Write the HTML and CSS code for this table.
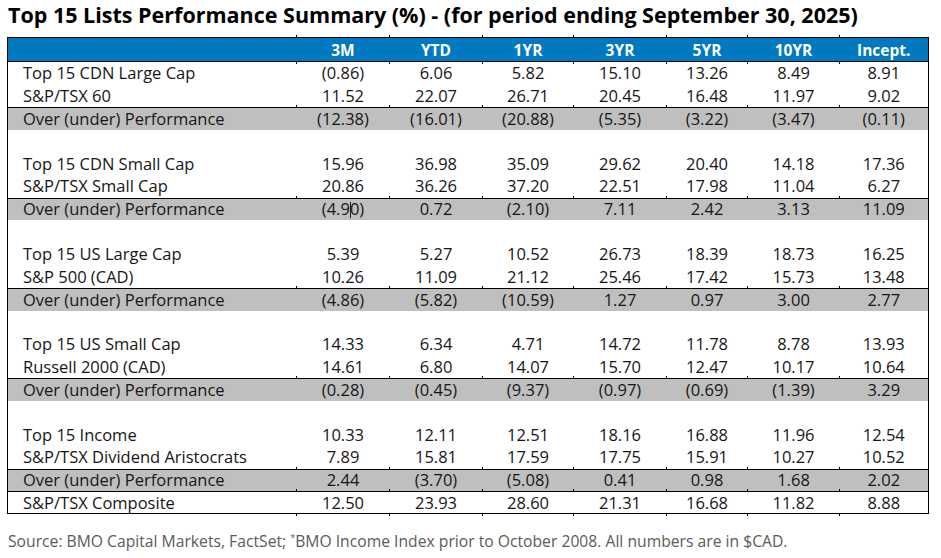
FILE: index.html
```html
<!DOCTYPE html>
<html lang="en">
<head>
<meta charset="utf-8">
<title>Top 15 Lists Performance Summary</title>
<link rel="stylesheet" href="styles.css">
</head>
<body>
<div class="page">
  <h1 class="title">Top 15 Lists Performance Summary (%) - (for period ending September 30, 2025)</h1>
  <table class="perf">
    <colgroup>
      <col class="c-label"><col class="c93"><col class="c93"><col class="c91"><col class="c93"><col class="c81"><col class="c92"><col class="c89">
    </colgroup>
    <thead>
      <tr class="head tick-top tick-bot">
        <th></th><th>3M</th><th>YTD</th><th>1YR</th><th>3YR</th><th>5YR</th><th>10YR</th><th>Incept.</th>
      </tr>
    </thead>
    <tbody>
      <tr><td>Top 15 CDN Large Cap</td><td>(0.86)</td><td>6.06</td><td>5.82</td><td>15.10</td><td>13.26</td><td>8.49</td><td>8.91</td></tr>
      <tr><td>S&amp;P/TSX 60</td><td>11.52</td><td>22.07</td><td>26.71</td><td>20.45</td><td>16.48</td><td>11.97</td><td>9.02</td></tr>
      <tr class="diff tick-top"><td>Over (under) Performance</td><td>(12.38)</td><td>(16.01)</td><td>(20.88)</td><td>(5.35)</td><td>(3.22)</td><td>(3.47)</td><td>(0.11)</td></tr>
      <tr class="spacer"><td></td><td></td><td></td><td></td><td></td><td></td><td></td><td></td></tr>

      <tr><td>Top 15 CDN Small Cap</td><td>15.96</td><td>36.98</td><td>35.09</td><td>29.62</td><td>20.40</td><td>14.18</td><td>17.36</td></tr>
      <tr><td>S&amp;P/TSX Small Cap</td><td>20.86</td><td>36.26</td><td>37.20</td><td>22.51</td><td>17.98</td><td>11.04</td><td>6.27</td></tr>
      <tr class="diff tick-top"><td>Over (under) Performance</td><td>(4.9<span class="caret"></span>0)</td><td>0.72</td><td>(2.10)</td><td>7.11</td><td>2.42</td><td>3.13</td><td>11.09</td></tr>
      <tr class="spacer"><td></td><td></td><td></td><td></td><td></td><td></td><td></td><td></td></tr>

      <tr><td>Top 15 US Large Cap</td><td>5.39</td><td>5.27</td><td>10.52</td><td>26.73</td><td>18.39</td><td>18.73</td><td>16.25</td></tr>
      <tr><td>S&amp;P 500 (CAD)</td><td>10.26</td><td>11.09</td><td>21.12</td><td>25.46</td><td>17.42</td><td>15.73</td><td>13.48</td></tr>
      <tr class="diff tick-top"><td>Over (under) Performance</td><td>(4.86)</td><td>(5.82)</td><td>(10.59)</td><td>1.27</td><td>0.97</td><td>3.00</td><td>2.77</td></tr>
      <tr class="spacer"><td></td><td></td><td></td><td></td><td></td><td></td><td></td><td></td></tr>

      <tr><td>Top 15 US Small Cap</td><td>14.33</td><td>6.34</td><td>4.71</td><td>14.72</td><td>11.78</td><td>8.78</td><td>13.93</td></tr>
      <tr><td>Russell 2000 (CAD)</td><td>14.61</td><td>6.80</td><td>14.07</td><td>15.70</td><td>12.47</td><td>10.17</td><td>10.64</td></tr>
      <tr class="diff tick-top"><td>Over (under) Performance</td><td>(0.28)</td><td>(0.45)</td><td>(9.37)</td><td>(0.97)</td><td>(0.69)</td><td>(1.39)</td><td>3.29</td></tr>
      <tr class="spacer"><td></td><td></td><td></td><td></td><td></td><td></td><td></td><td></td></tr>

      <tr><td>Top 15 Income</td><td>10.33</td><td>12.11</td><td>12.51</td><td>18.16</td><td>16.88</td><td>11.96</td><td>12.54</td></tr>
      <tr><td>S&amp;P/TSX Dividend Aristocrats</td><td>7.89</td><td>15.81</td><td>17.59</td><td>17.75</td><td>15.91</td><td>10.27</td><td>10.52</td></tr>
      <tr class="diff tick-top"><td>Over (under) Performance</td><td>2.44</td><td>(3.70)</td><td>(5.08)</td><td>0.41</td><td>0.98</td><td>1.68</td><td>2.02</td></tr>
      <tr class="total tick-top tick-bot"><td>S&amp;P/TSX Composite</td><td>12.50</td><td>23.93</td><td>28.60</td><td>21.31</td><td>16.68</td><td>11.82</td><td>8.88</td></tr>
    </tbody>
  </table>
  <p class="source">Source: BMO Capital Markets, FactSet; <sup>*</sup>BMO Income Index prior to October 2008. All numbers are in $CAD.</p>
</div>
</body>
</html>
```

FILE: styles.css
```css
html, body {
  margin: 0;
  padding: 0;
  background: #ffffff;
}

.page {
  width: 941px;
  height: 558px;
  padding: 0 0 0 7px;
  box-sizing: border-box;
  font-family: "Open Sans", "Noto Sans", sans-serif;
  color: #161616;
}

.title {
  margin: 0 0 7px 1px;
  font-size: 21.5px;
  line-height: 30px;
  font-weight: 700;
  letter-spacing: 0;
  color: #000;
  white-space: nowrap;
}

.perf {
  width: 922px;
  table-layout: fixed;
  border-collapse: collapse;
  border-left: 1px solid #000;
  border-right: 1px solid #000;
  font-size: 16.5px;
}

.c-label { width: 289px; }
.c93 { width: 93px; }
.c91 { width: 91px; }
.c81 { width: 81px; }
.c92 { width: 92px; }
.c89 { width: 89px; }

.perf th,
.perf td {
  padding: 0;
  text-align: center;
  white-space: nowrap;
  position: relative;
  line-height: 20px;
}

.perf th:first-child,
.perf td:first-child {
  text-align: left;
  padding-left: 15px;
}

.head th {
  height: 23px;
  background: #0079c1;
  color: #fff;
  font-size: 15.5px;
  font-weight: 700;
  border-top: 1px solid #000;
  border-bottom: 1px solid #000;
}

.perf tbody td {
  height: 22.6px;
}

.perf tbody .diff td {
  height: 21.6px;
  background: #bfbfbf;
  border-top: 1px solid #000;
}

.perf tbody .total td {
  height: 20.6px;
  border-top: 1px solid #000;
  border-bottom: 1px solid #000;
}

/* small column ticks peeking through the horizontal rules */
.tick-top > :not(:first-child)::before {
  content: "";
  position: absolute;
  left: -1px;
  top: -3px;
  width: 1px;
  height: 3px;
  background: #000;
}

.tick-bot > :not(:first-child)::after {
  content: "";
  position: absolute;
  left: -1px;
  bottom: -3px;
  width: 1px;
  height: 3px;
  background: #000;
}

.caret {
  display: inline-block;
  width: 1px;
  height: 16px;
  margin-right: -1px;
  background: #222;
  vertical-align: -3px;
}

.source {
  margin: 17px 0 0 1px;
  font-size: 15.7px;
  line-height: 20px;
  color: #5e5a56;
  white-space: nowrap;
}

.source sup {
  font-size: 9px;
  line-height: 0;
  vertical-align: 6px;
}
```
